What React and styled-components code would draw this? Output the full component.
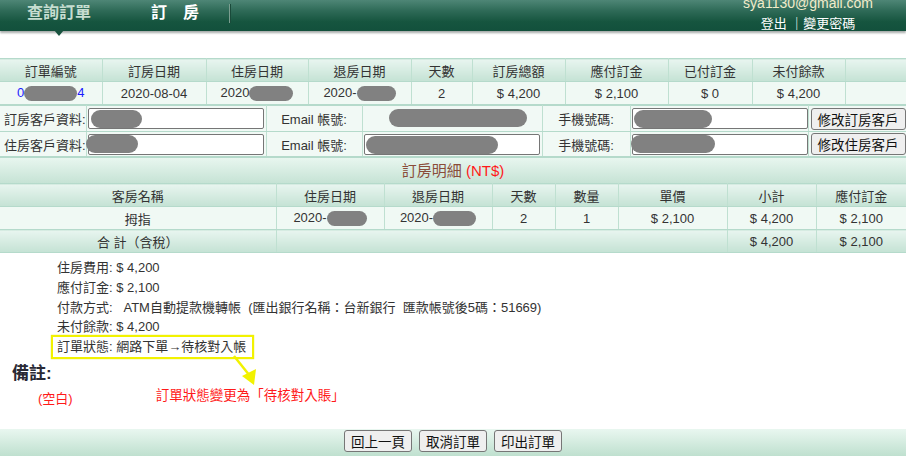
import React from "react";
import styled, { createGlobalStyle } from "styled-components";

const GlobalStyle = createGlobalStyle`
  body {
    margin: 0;
    background: #fff;
    font-family: "Liberation Sans", "Noto Sans CJK TC", sans-serif;
    font-size: 13px;
    color: #333;
  }
`;

const orderCols = [102, 104, 102, 103, 61, 93, 103, 84, 93, 61];
const customerCols = [86, 180, 96, 180, 88, 178, 98];
const detailCols = [276, 108, 108, 63, 63, 109, 89, 90];

const App = () => {
  return (
    <>
      <GlobalStyle />
      <TopBar>
        <Tab active>查詢訂單</Tab>
        <Tab>訂　房</Tab>
        <TabSep />
        <UserBox>
          <UserEmail>sya1130@gmail.com</UserEmail>
          <UserLinks>登出 ｜變更密碼</UserLinks>
        </UserBox>
      </TopBar>

      <Main>
        <Table>
          <colgroup>
            {orderCols.map((w, i) => <col key={i} style={{ width: w }} />)}
          </colgroup>
          <thead>
            <tr>
              {["訂單編號", "訂房日期", "住房日期", "退房日期", "天數", "訂房總額", "應付訂金", "已付訂金", "未付餘款", ""].map((t, i) => (
                <Th key={i}>{t}</Th>
              ))}
            </tr>
          </thead>
          <tbody>
            <tr>
              <Td><OrderNo>0</OrderNo><Blob w={53} /><OrderNo>4</OrderNo></Td>
              <Td>2020-08-04</Td>
              <Td>2020<Blob w={44} /></Td>
              <Td>2020-<Blob w={39} /></Td>
              <Td>2</Td>
              <Td>$ 4,200</Td>
              <Td>$ 2,100</Td>
              <Td>$ 0</Td>
              <Td>$ 4,200</Td>
              <Td />
            </tr>
          </tbody>
        </Table>

        <Table>
          <colgroup>
            {customerCols.map((w, i) => <col key={i} style={{ width: w }} />)}
          </colgroup>
          <tbody>
            <CustomerRow h={26}>
              <LabelTd>訂房客戶資料:</LabelTd>
              <FieldTd><Input /><Blob float x={4} y={4} w={51} h={18} /></FieldTd>
              <CenterTd>Email 帳號:</CenterTd>
              <FieldTd><Blob float x={26} y={3} w={138} h={18} /></FieldTd>
              <CenterTd>手機號碼:</CenterTd>
              <FieldTd><Input /><Blob float x={3} y={4} w={78} h={18} /></FieldTd>
              <ButtonTd><Button>修改訂房客戶</Button></ButtonTd>
            </CustomerRow>
            <CustomerRow h={25}>
              <LabelTd>住房客戶資料:</LabelTd>
              <FieldTd><Input /><Blob float x={-1} y={3} w={52} h={18} /></FieldTd>
              <CenterTd>Email 帳號:</CenterTd>
              <FieldTd><Input /><Blob float x={3} y={4} w={132} h={18} /></FieldTd>
              <CenterTd>手機號碼:</CenterTd>
              <FieldTd><Input /><Blob float x={0} y={3} w={84} h={18} /></FieldTd>
              <ButtonTd><Button>修改住房客戶</Button></ButtonTd>
            </CustomerRow>
          </tbody>
        </Table>

        <DetailTitle>
          訂房明細 <Currency>(NT$)</Currency>
        </DetailTitle>

        <Table>
          <colgroup>
            {detailCols.map((w, i) => <col key={i} style={{ width: w }} />)}
          </colgroup>
          <thead>
            <tr>
              {["客房名稱", "住房日期", "退房日期", "天數", "數量", "單價", "小計", "應付訂金"].map((t, i) => (
                <Th key={i}>{t}</Th>
              ))}
            </tr>
          </thead>
          <tbody>
            <tr>
              <Td>拇指</Td>
              <Td>2020-<Blob w={40} /></Td>
              <Td>2020-<Blob w={43} /></Td>
              <Td>2</Td>
              <Td>1</Td>
              <Td>$ 2,100</Td>
              <Td>$ 4,200</Td>
              <Td>$ 2,100</Td>
            </tr>
            <tr>
              <Th>合 計（含稅）</Th>
              <Th colSpan={5} />
              <Th>$ 4,200</Th>
              <Th>$ 2,100</Th>
            </tr>
          </tbody>
        </Table>

        <Summary>
          <Line>住房費用: $ 4,200</Line>
          <Line>應付訂金: $ 2,100</Line>
          <Line>付款方式: &nbsp; ATM自動提款機轉帳 &nbsp;(匯出銀行名稱：台新銀行 &nbsp;匯款帳號後5碼：51669)</Line>
          <Line>未付餘款: $ 4,200</Line>
          <StatusBox>訂單狀態: 網路下單→待核對入帳</StatusBox>
          <Arrow width="40" height="40" viewBox="0 0 40 40">
            <line x1="3" y1="2" x2="19" y2="22" stroke="#f2f200" strokeWidth="2.5" />
            <polygon points="11,22 25,15 23,31" fill="#f2f200" />
          </Arrow>
        </Summary>

        <RemarkTitle>備註:</RemarkTitle>
        <RemarkRow>
          <RedText>(空白)</RedText>
          <Callout>訂單狀態變更為「待核對入賬」</Callout>
        </RemarkRow>
      </Main>

      <Footer>
        <Button>回上一頁</Button>
        <Button>取消訂單</Button>
        <Button>印出訂單</Button>
      </Footer>
    </>
  );
};

export default App;

const TopBar = styled.div`
  position: relative;
  display: flex;
  align-items: flex-start;
  height: 31px;
  overflow: visible;
  background: linear-gradient(#4e8676 0%, #2e6a57 35%, #16553f 70%, #12503c 100%);
  box-shadow: 0 2px 2px rgba(60, 70, 66, 0.45);
`;

const Tab = styled.div`
  position: relative;
  margin-left: ${p => (p.active ? "27px" : "60px")};
  padding-top: 1px;
  font-size: 16px;
  line-height: 20px;
  font-weight: bold;
  color: ${p => (p.active ? "#c6ddd0" : "#fff")};
  font-family: "Noto Sans CJK TC", sans-serif;

  &::after {
    content: "";
    display: ${p => (p.active ? "block" : "none")};
    position: absolute;
    left: 50%;
    top: 30px;
    margin-left: -5px;
    border-left: 5px solid transparent;
    border-right: 5px solid transparent;
    border-top: 6px solid #18533f;
  }
`;

const TabSep = styled.div`
  width: 1px;
  height: 19px;
  margin: 4px 0 0 30px;
  background: #7b9e90;
  box-shadow: 1px 0 0 #1a4a3a;
`;

const UserBox = styled.div`
  margin-left: auto;
  margin-right: 33px;
  margin-top: -5px;
  text-align: center;
  line-height: 16px;
`;

const UserEmail = styled.div`
  color: #f2ecca;
  font-size: 14px;
  margin-bottom: 5px;
`;

const UserLinks = styled.div`
  color: #fff;
  font-size: 13px;
`;

const Main = styled.div`
  padding-top: 27px;
`;

const Table = styled.table`
  width: 906px;
  table-layout: fixed;
  border-collapse: collapse;
  border-top: 1px solid #b5dacb;
`;

const Th = styled.th`
  height: 22px;
  padding: 0;
  font-weight: normal;
  font-size: 13px;
  color: #333;
  text-align: center;
  background: linear-gradient(#e8f5ef, #c4e2d4);
  border-right: 1px solid #bfe0d1;
  border-bottom: 1px solid #b5dacb;

  &:last-child {
    border-right: none;
  }
`;

const Td = styled.td`
  height: 22px;
  padding: 0;
  font-size: 13px;
  color: #333;
  text-align: center;
  white-space: nowrap;
  background: #f0f9f4;
  border-right: 1px solid #bfe0d1;
  border-bottom: 1px solid #b5dacb;

  &:last-child {
    border-right: none;
  }
`;

const OrderNo = styled.span`
  color: #1a1aff;
`;

const Blob = styled.span`
  display: inline-block;
  position: ${p => (p.float ? "absolute" : "static")};
  left: ${p => p.x || 0}px;
  top: ${p => p.y || 0}px;
  width: ${p => p.w}px;
  height: ${p => p.h || 15}px;
  border-radius: 9px;
  background: #818181;
  vertical-align: middle;
`;

const CustomerRow = styled.tr`
  height: ${p => p.h}px;
`;

const cellBase = `
  padding: 0;
  font-size: 13px;
  color: #333;
  white-space: nowrap;
  background: #f1f9f5;
  border-right: 1px solid #bfe0d1;
  border-bottom: 1px solid #b5dacb;
`;

const LabelTd = styled.td`
  ${cellBase}
  padding-left: 4px;
`;

const CenterTd = styled.td`
  ${cellBase}
  text-align: center;
`;

const FieldTd = styled.td`
  ${cellBase}
  position: relative;
  padding-left: 1px;
`;

const ButtonTd = styled.td`
  ${cellBase}
  border-right: none;
  padding-left: 2px;
`;

const Input = styled.span`
  display: block;
  width: 174px;
  height: 19px;
  border: 1px solid #767676;
  border-radius: 2px;
  background: #fff;
`;

const Button = styled.button`
  height: 22px;
  padding: 0 6px;
  font-family: "Noto Sans CJK TC", sans-serif;
  font-size: 13.5px;
  line-height: 18px;
  color: #111;
  background: #efefef;
  border: 1px solid #767676;
  border-radius: 3px;
`;

const DetailTitle = styled.div`
  height: 25px;
  line-height: 25px;
  text-align: center;
  font-size: 15px;
  color: #8a4c3a;
  background: linear-gradient(#e8f6ef, #c6e3d5);
  border-top: 1px solid #b5dacb;
`;

const Currency = styled.span`
  color: #ff1a1a;
`;

const Summary = styled.div`
  position: relative;
  padding: 5px 0 0 57px;
`;

const Line = styled.div`
  line-height: 19.75px;
  font-size: 13px;
  color: #333;
`;

const StatusBox = styled.div`
  display: inline-block;
  margin: -2px 0 0 -6px;
  padding: 0 6px 0 4px;
  line-height: 20px;
  font-size: 13px;
  color: #333;
  border: 2px solid #f2f200;
  box-shadow: 0 0 1px #e0e000;
`;

const Arrow = styled.svg`
  position: absolute;
  left: 231px;
  top: 101px;
`;

const RemarkTitle = styled.div`
  margin: 4px 0 0 12px;
  font-size: 17px;
  font-weight: bold;
  line-height: 22px;
  color: #2a2a35;
`;

const RemarkRow = styled.div`
  display: flex;
  align-items: flex-start;
  padding-left: 38px;
  height: 44px;
`;

const RedText = styled.span`
  margin-top: 3px;
  font-size: 13px;
  color: #ff1a1a;
`;

const Callout = styled.span`
  margin-left: 83px;
  margin-top: -1px;
  font-size: 13.5px;
  color: #ff1a1a;
`;

const Footer = styled.div`
  display: flex;
  justify-content: center;
  align-items: flex-start;
  gap: 7px;
  height: 26px;
  padding-top: 1px;
  background: linear-gradient(#e9f7f0, #bfe0cf);
`;
